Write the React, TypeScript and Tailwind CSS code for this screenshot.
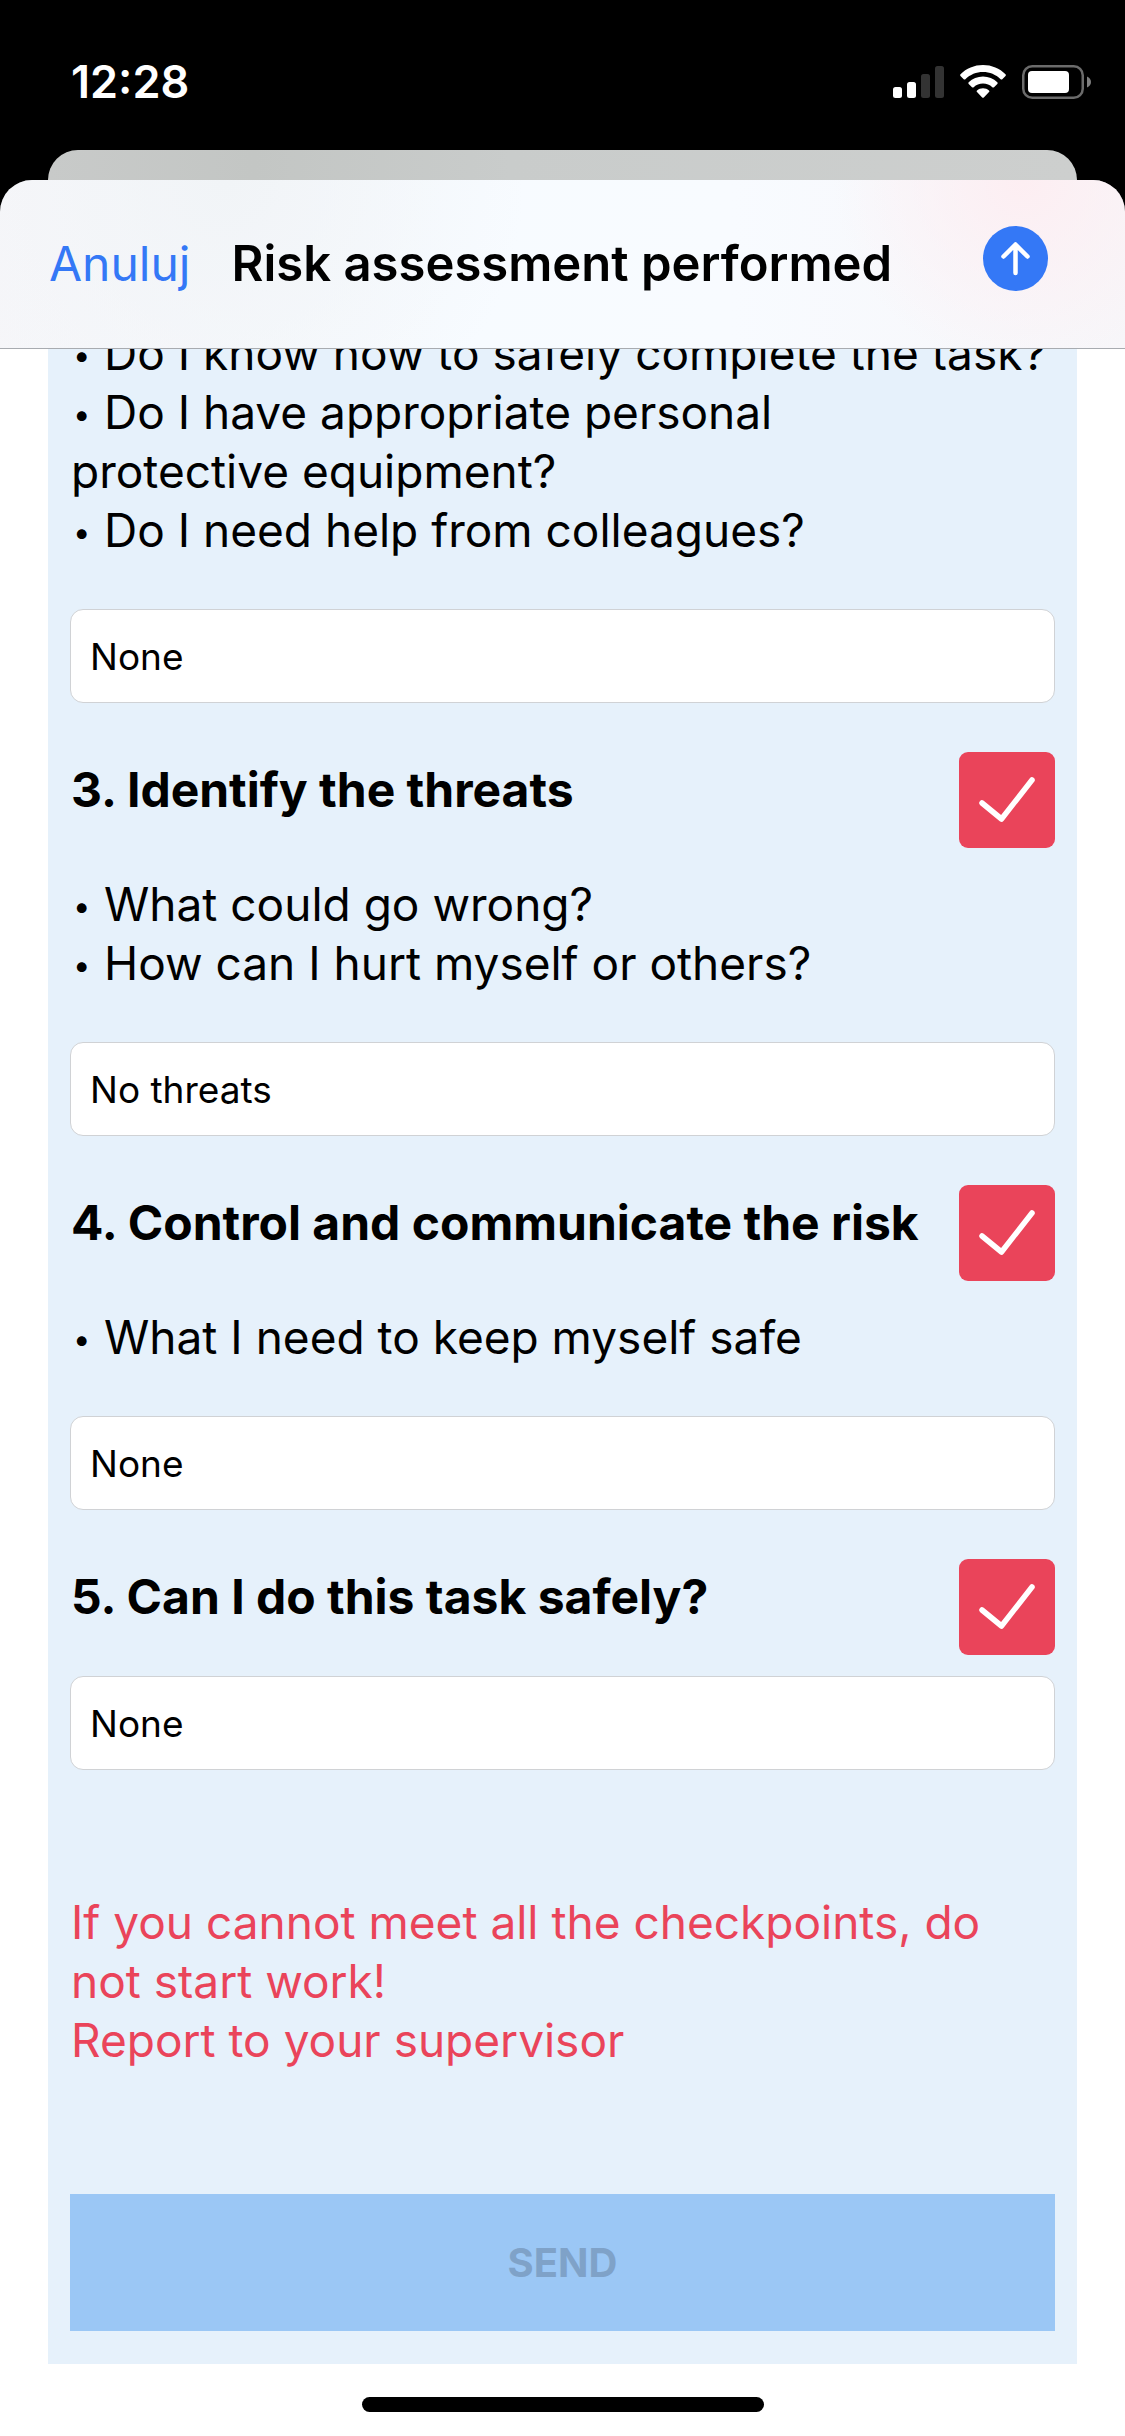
import { useId } from "react";

type Step = {
  title?: string;
  questions: string[];
  answer: string;
};

const steps: Step[] = [
  {
    questions: [
      "Do I know how to safely complete the task?",
      "Do I have appropriate personal\nprotective equipment?",
      "Do I need help from colleagues?",
    ],
    answer: "None",
  },
  {
    title: "3. Identify the threats",
    questions: ["What could go wrong?", "How can I hurt myself or others?"],
    answer: "No threats",
  },
  {
    title: "4. Control and communicate the risk",
    questions: ["What I need to keep myself safe"],
    answer: "None",
  },
  { title: "5. Can I do this task safely?", questions: [], answer: "None" },
];

function StatusBar() {
  return (
    <div className="flex h-[150px] items-start justify-between pt-[55px] pr-[33px] pl-[71px] text-white">
      <time className="text-[45px] leading-[54px] font-semibold">12:28</time>
      <svg width="200" height="36" viewBox="892 64 200 36" className="mt-[9px]" aria-label="Signal, Wi-Fi and battery">
        <g fill="#fff">
          <rect x="893" y="87" width="9" height="11" rx="2.5" />
          <rect x="907" y="82" width="9" height="16" rx="2.5" />
          <rect x="921" y="74" width="9" height="24" rx="2.5" opacity=".2" />
          <rect x="935" y="66" width="9" height="32" rx="2.5" opacity=".2" />
          <path d="M983 65c8.700 0 16.700 3.400 22.500 9.200.5.500.5 1.200 0 1.700l-3.200 3.300c-.5.500-1.200.500-1.700 0-4.700-4.500-10.900-7.100-17.600-7.100s-12.900 2.600-17.600 7.100c-.5.500-1.200.500-1.700 0l-3.200-3.300c-.5-.500-.5-1.200 0-1.700C966.300 68.400 974.300 65 983 65z" />
          <path d="M983 76.500c5.500 0 10.500 2.100 14.300 5.700.5.500.5 1.200 0 1.700l-3.300 3.300c-.5.500-1.200.500-1.700 0-2.500-2.200-5.700-3.600-9.300-3.600s-6.800 1.400-9.300 3.600c-.5.500-1.200.500-1.700 0l-3.300-3.300c-.5-.500-.5-1.200 0-1.700 3.800-3.600 8.800-5.700 14.300-5.700z" />
          <path d="M983 88.200c2.300 0 4.400.8 6 2.200.5.500.5 1.200 0 1.700l-5.200 5.400c-.5.500-1.100.5-1.600 0l-5.200-5.400c-.5-.500-.5-1.200 0-1.700 1.600-1.400 3.700-2.200 6-2.200z" />
          <rect x="1028" y="71" width="41" height="22" rx="4" />
          <path d="M1087 76.500c2.500 1 4 3 4 5.500s-1.500 4.500-4 5.500z" opacity=".5" />
        </g>
        <rect x="1023.250" y="66.250" width="59.500" height="31.500" rx="9" fill="none" stroke="#fff" strokeWidth="2.500" opacity=".42" />
      </svg>
    </div>
  );
}

function SheetHeader() {
  return (
    <header className="relative z-10 flex h-[169px] items-start rounded-t-[32px] border-b border-[#a8abb0] bg-[radial-gradient(circle_at_91%_0%,#fdeef2_0,#fbf0f400_190px),radial-gradient(circle_at_20%_0%,#f1f4f7_0,#f1f4f700_300px),linear-gradient(to_right,#f6f6f9_0,#f7fbff_40%,#f8fbff_65%,#f7f6f9_100%)] pr-[77px] pl-[49px]">
      <button type="button" className="mt-[54px] text-[48px] leading-[60px] text-[#3478f6]">
        Anuluj
      </button>
      <h1 className="mt-[54px] ml-[41px] text-[49px] leading-[60px] font-semibold whitespace-nowrap">
        Risk assessment performed
      </h1>
      <button type="button" aria-label="Send" className="mt-[46px] ml-auto size-[65px] shrink-0 rounded-full bg-[#3478f6]">
        <svg viewBox="0 0 65 65" fill="none" stroke="#fff" strokeWidth="4.500" strokeLinecap="round" strokeLinejoin="round">
          <path d="M32.500 47V19M20.500 30.500L32.500 18.500L44.500 30.500" />
        </svg>
      </button>
    </header>
  );
}

function TickBox({ id }: { id: string }) {
  return (
    <span className="grid size-24 shrink-0">
      <input
        id={id}
        type="checkbox"
        defaultChecked
        className="peer col-start-1 row-start-1 size-24 appearance-none rounded-[9px] bg-white checked:bg-[#ea445a]"
      />
      <svg
        viewBox="0 0 96 96"
        fill="none"
        stroke="#fff"
        strokeWidth="5.500"
        strokeLinecap="round"
        strokeLinejoin="round"
        className="pointer-events-none invisible col-start-1 row-start-1 size-24 peer-checked:visible"
      >
        <path d="M23 51L42.500 67L73 28" />
      </svg>
    </span>
  );
}

function Question({ text }: { text: string }) {
  return (
    <li className="pl-px text-[46px] leading-[59px] whitespace-nowrap">
      {text.split("\n").map((line, i) => (
        <div key={line}>
          {i === 0 && <span className="inline-block w-[33px] pl-0.5 align-[4px] text-[31px] leading-none">•</span>}
          <span>{line}</span>
        </div>
      ))}
    </li>
  );
}

function StepBlock({ step }: { step: Step }) {
  const id = useId();
  const hasQuestions = step.questions.length > 0;
  return (
    <section>
      {step.title && (
        <div className="flex items-start justify-between pt-[49px]">
          <label htmlFor={id} className="pt-2 pl-px text-[48px] leading-[59px] font-bold whitespace-nowrap">
            {step.title}
          </label>
          <TickBox id={id} />
        </div>
      )}
      {hasQuestions && (
        <ul className={step.title ? "pt-[27px] pb-[49px]" : "pb-[49px]"}>
          {step.questions.map((q) => (
            <Question key={q} text={q} />
          ))}
        </ul>
      )}
      <div className={hasQuestions ? "" : "pt-[21px]"}>
        <input
          type="text"
          aria-label={step.title ? step.title + " – answer" : "Answer"}
          defaultValue={step.answer}
          className="block h-[94px] w-full rounded-[13px] border border-[#d0d2d5] bg-white px-[19px] text-[37px] leading-[46px]"
        />
      </div>
    </section>
  );
}

export default function App() {
  return (
    <div className="min-h-screen bg-white font-['Inter',sans-serif] text-black">
      <div className="bg-black">
        <StatusBar />
        <div className="mx-12 h-[30px] rounded-t-[30px] bg-[linear-gradient(to_right,#c8cac9,#c3c6c4_20%,#c9cccb_45%,#cdcfce)]" />
        <SheetHeader />
      </div>
      <main className="-mt-[25px] mx-12 bg-[#e6f1fb] px-[22px] pb-[33px]">
        {steps.map((step) => (
          <StepBlock key={step.answer + (step.title ?? "")} step={step} />
        ))}
        <p className="pt-[123px] pb-[124px] pl-px text-[46px] leading-[59px] text-[#ea445a]">
          If you cannot meet all the checkpoints, do
          <br />
          not start work!
          <br />
          Report to your supervisor
        </p>
        <button
          type="submit"
          disabled
          className="h-[137px] w-full bg-[#9bc7f5] text-[40px] leading-[48px] font-bold text-[#7fa2c8]"
        >
          SEND
        </button>
      </main>
      <div className="mx-auto mt-[33px] mb-6 h-[15px] w-[402px] rounded-full bg-black" />
    </div>
  );
}
